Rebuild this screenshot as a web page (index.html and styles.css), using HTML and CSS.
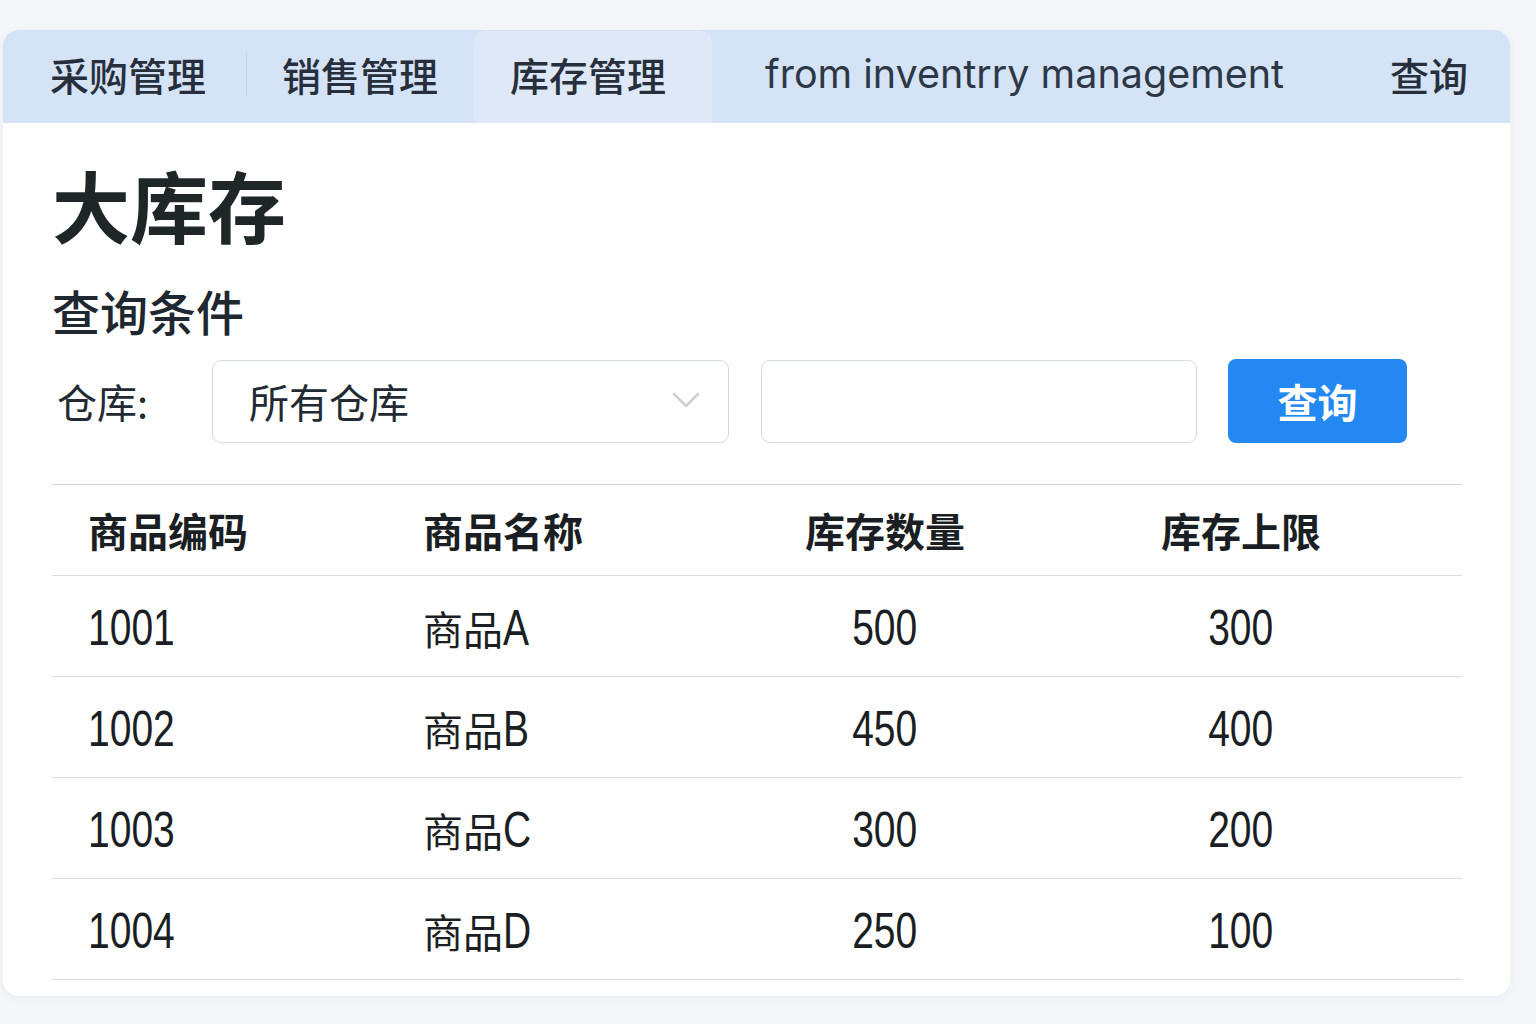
FILE: index.html
```html
<!DOCTYPE html>
<html lang="zh-CN">
<head>
<meta charset="utf-8">
<title>大库存</title>
<link rel="stylesheet" href="styles.css">
</head>
<body>
<div class="page">
  <div class="card">
    <nav class="nav">
      <a class="nav-item first">采购管理</a>
      <span class="nav-sep"></span>
      <a class="nav-item">销售管理</a>
      <a class="nav-item active">库存管理</a>
      <a class="nav-item en">from inventrry management</a>
      <a class="nav-item last">查询</a>
    </nav>
    <main class="content">
      <h1 class="title">大库存</h1>
      <h2 class="subtitle">查询条件</h2>
      <div class="form-row">
        <label class="label">仓库:</label>
        <div class="select">
          <span class="select-text">所有仓库</span>
          <svg class="chevron" width="28" height="20" viewBox="0 0 28 20"><polyline points="2,3 14,15 26,3" fill="none" stroke="#cdd1d7" stroke-width="2.6" stroke-linecap="round" stroke-linejoin="round"/></svg>
        </div>
        <div class="input"></div>
        <button class="btn">查询</button>
      </div>
      <div class="table">
        <div class="row head">
          <div class="cell">商品编码</div>
          <div class="cell">商品名称</div>
          <div class="cell center">库存数量</div>
          <div class="cell center">库存上限</div>
          <div class="cell"></div>
        </div>
        <div class="row">
          <div class="cell"><span class="num">1001</span></div>
          <div class="cell">商品<span class="num">A</span></div>
          <div class="cell center"><span class="num">500</span></div>
          <div class="cell center"><span class="num">300</span></div>
          <div class="cell"></div>
        </div>
        <div class="row">
          <div class="cell"><span class="num">1002</span></div>
          <div class="cell">商品<span class="num">B</span></div>
          <div class="cell center"><span class="num">450</span></div>
          <div class="cell center"><span class="num">400</span></div>
          <div class="cell"></div>
        </div>
        <div class="row">
          <div class="cell"><span class="num">1003</span></div>
          <div class="cell">商品<span class="num">C</span></div>
          <div class="cell center"><span class="num">300</span></div>
          <div class="cell center"><span class="num">200</span></div>
          <div class="cell"></div>
        </div>
        <div class="row">
          <div class="cell"><span class="num">1004</span></div>
          <div class="cell">商品<span class="num">D</span></div>
          <div class="cell center"><span class="num">250</span></div>
          <div class="cell center"><span class="num">100</span></div>
          <div class="cell"></div>
        </div>
      </div>
    </main>
  </div>
</div>
</body>
</html>
```
FILE: styles.css
```css
* { box-sizing: border-box; }
html, body { margin: 0; padding: 0; }
body {
  background: #f4f6f9;
  font-family: "Noto Sans CJK SC", "Noto Sans", sans-serif;
  color: #1f2730;
  width: 1536px;
  height: 1024px;
  overflow: hidden;
}
.page {
  padding: 30px 26px 0 3px;
}
.card {
  width: 1507px;
  height: 966px;
  background: #ffffff;
  border-radius: 16px;
  overflow: hidden;
  box-shadow: 0 2px 10px rgba(40, 60, 90, 0.05);
}
.nav {
  height: 93px;
  background: #d5e3f7;
  display: flex;
  align-items: center;
  padding-left: 12px;
}
.nav-item {
  font-size: 39px;
  font-weight: 500;
  color: #262f3b;
  height: 93px;
  display: flex;
  align-items: center;
  padding: 0 35px 6px;
  text-decoration: none;
  white-space: nowrap;
}
.nav-item.first { padding-right: 40px; }
.nav-sep {
  width: 1px;
  height: 44px;
  margin-bottom: 6px;
  background: #c3d2e8;
}
.nav-item.active {
  background: #dee8f6;
  border-radius: 12px 12px 0 0;
  height: 92px;
  padding-left: 37px;
  padding-right: 46px;
}
.nav-item.en {
  font-family: "Inter", "Noto Sans", sans-serif;
  font-weight: 400;
  font-size: 39.5px;
  color: #2d3846;
  padding-left: 53px;
}
.nav-item.last {
  margin-left: auto;
  padding-right: 42px;
}
.content {
  padding: 34px 48px 0 49px;
}
.title {
  margin: 0;
  font-size: 78px;
  line-height: 94px;
  font-weight: 700;
  color: #1e2628;
}
.subtitle {
  margin: 30px 0 0;
  font-size: 48px;
  line-height: 58px;
  font-weight: 500;
  color: #1f2730;
}
.form-row {
  margin-top: 20px;
  display: flex;
  align-items: center;
}
.label {
  width: 160px;
  font-size: 40px;
  padding-left: 5px;
  color: #222a33;
}
.select {
  width: 517px;
  height: 83px;
  border: 1.5px solid #d6dadf;
  border-radius: 9px;
  display: flex;
  align-items: center;
  justify-content: space-between;
  padding: 0 28px 0 36px;
}
.select-text {
  font-size: 40px;
  color: #222a33;
}
.input {
  margin-left: 32px;
  width: 436px;
  height: 83px;
  border: 1.5px solid #d6dadf;
  border-radius: 9px;
}
.btn {
  margin-left: 31px;
  width: 179px;
  height: 84px;
  background: #2388f1;
  border: none;
  border-radius: 8px;
  color: #ffffff;
  font-family: "Noto Sans CJK SC", sans-serif;
  font-size: 40px;
  font-weight: 700;
}
.table {
  margin-top: 41px;
  width: 1410px;
  border-top: 1.5px solid #d3d3d3;
}
.row {
  display: grid;
  grid-template-columns: 335px 320px 356px 356px 1fr;
  height: 101px;
  border-bottom: 1.5px solid #dcdcdc;
  align-items: center;
}
.row.head {
  height: 91px;
}
.cell {
  font-size: 40px;
  color: #1b1f24;
  white-space: nowrap;
  padding-top: 4px;
}
.cell:nth-child(1),
.cell:nth-child(2) { padding-left: 36px; }
.cell.center { text-align: center; }
.head .cell {
  font-weight: 700;
  padding-top: 0;
}
.num {
  display: inline-block;
  font-family: "Liberation Sans", sans-serif;
  font-size: 50px;
  transform: scaleX(0.78);
  transform-origin: left center;
}
.center .num {
  transform-origin: center center;
}
```
